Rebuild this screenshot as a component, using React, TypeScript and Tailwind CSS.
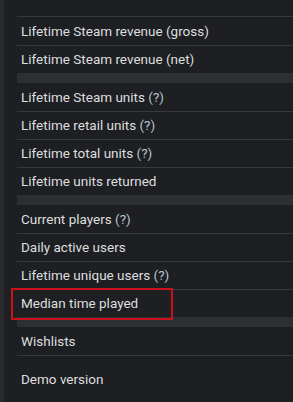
import React from 'react';

type Item = { label: string; help?: boolean; highlight?: boolean };

const groups: Item[][] = [
  [{ label: 'Lifetime Steam revenue (gross)' }, { label: 'Lifetime Steam revenue (net)' }],
  [
    { label: 'Lifetime Steam units', help: true },
    { label: 'Lifetime retail units', help: true },
    { label: 'Lifetime total units', help: true },
    { label: 'Lifetime units returned' },
  ],
  [
    { label: 'Current players', help: true },
    { label: 'Daily active users' },
    { label: 'Lifetime unique users', help: true },
    { label: 'Median time played', highlight: true },
  ],
];

function Row({ item, first }: { item: Item; first: boolean }) {
  return (
    <div
      className={`relative h-[28px] flex items-center pl-1 ${first ? '' : 'border-t border-[#38393d]'}`}
    >
      <span>
        {item.label}
        {item.help && <span className="text-[#b5c3cf]"> (?)</span>}
      </span>
      {item.highlight && (
        <div className="absolute -left-[6px] -top-[2px] w-[162px] h-[32px] border-2 border-[#c8121c]" />
      )}
    </div>
  );
}

export default function App() {
  return (
    <div
      className="w-[293px] h-[402px] overflow-hidden bg-[#1e1f22] flex text-[#dcdedf] text-[13.5px]"
      style={{ fontFamily: 'Roboto, "Open Sans", Arial, sans-serif' }}
    >
      {/* left rail */}
      <div className="w-[4px] bg-[#2a2b2f]" />
      <div className="flex-1 pl-[13px]">
        <div className="h-[16px]" />
        <div className="border-t border-[#38393d]">
          {groups.map((g, gi) => (
            <div key={gi}>
              {gi > 0 && <div className="h-[10px] bg-[#2e2f33]" />}
              {g.map((item, i) => (
                <Row key={item.label} item={item} first={i === 0} />
              ))}
            </div>
          ))}
          <div className="h-[10px] bg-[#2e2f33]" />
          <Row item={{ label: 'Wishlists' }} first />
          <div className="border-t border-[#38393d] h-[48px] flex items-center pl-1">
            Demo version
          </div>
        </div>
      </div>
    </div>
  );
}
